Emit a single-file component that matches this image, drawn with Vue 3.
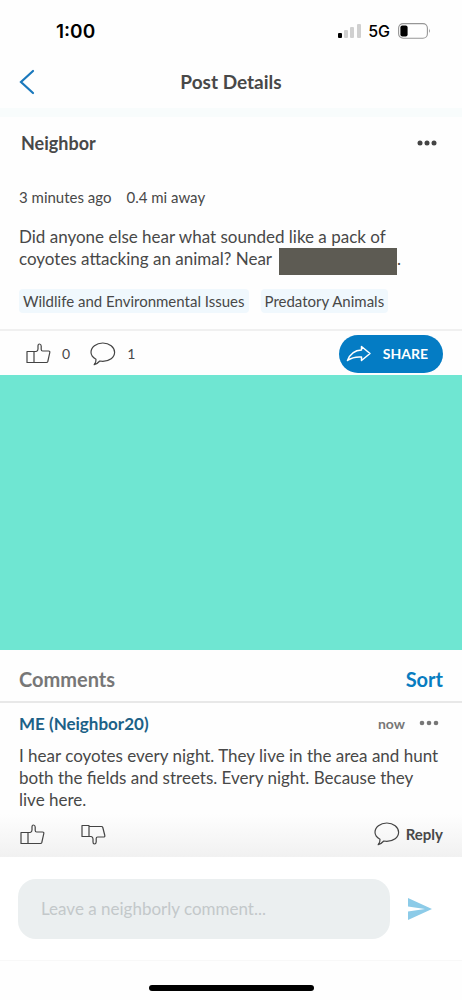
<script setup>
import { ref } from 'vue'

const tags = ['Wildlife and Environmental Issues', 'Predatory Animals']
const draft = ref('')
</script>

<template>
  <div class="screen">
    <div class="status">
      <span class="clock">1:00</span>
      <div class="indicators">
        <svg class="signal" viewBox="0 0 24 16" aria-hidden="true">
          <rect x="0" y="10" width="4" height="5" rx="1" fill="#000" />
          <rect x="6" y="7" width="4" height="8" rx="1" fill="#d0d0d0" />
          <rect x="12" y="4" width="4" height="11" rx="1" fill="#d0d0d0" />
          <rect x="19" y="1" width="4" height="14" rx="1" fill="#d0d0d0" />
        </svg>
        <span class="network">5G</span>
        <svg class="battery" viewBox="0 0 33 16" aria-hidden="true">
          <rect x="0.6" y="0.6" width="28.8" height="14.6" rx="4.5" fill="none" stroke="#969696" stroke-width="1.1" />
          <rect x="2.4" y="2.4" width="7.2" height="11" rx="2" fill="#000" />
          <path d="M31 5.5q1.8 2.3 0 4.6z" fill="#969696" />
        </svg>
      </div>
    </div>

    <header class="nav">
      <button class="back" type="button" aria-label="Back">
        <svg viewBox="0 0 16 26" aria-hidden="true">
          <path d="M14 2 2 13l12 11" fill="none" stroke="#1a78bc" stroke-width="2.2" stroke-linecap="round" />
        </svg>
      </button>
      <h1>Post Details</h1>
    </header>

    <main>
      <article class="post">
        <div class="author">
          <h2>Neighbor</h2>
          <button class="more" type="button" aria-label="Post options">
            <svg viewBox="0 0 20 6" fill="#444" aria-hidden="true">
              <circle cx="3" cy="3" r="2.5" /><circle cx="10" cy="3" r="2.5" /><circle cx="17" cy="3" r="2.5" />
            </svg>
          </button>
        </div>
        <div class="meta"><span>3 minutes ago</span><span>0.4 mi away</span></div>
        <p class="body">
          Did anyone else hear what sounded like a pack of coyotes attacking an animal? Near <span class="redacted"></span>.
        </p>
        <div class="tags">
          <span v-for="tag in tags" :key="tag" class="tag">{{ tag }}</span>
        </div>
      </article>

      <div class="actions">
        <button class="count" type="button" aria-label="Like post">
          <svg class="thumb" viewBox="0 0 25 21" aria-hidden="true">
            <path d="M1 8.5h7v11H1zM8 8.5h2.2q1.8-.4 1.8-2.5V3q0-2 1.500-2T15.200 3v3.500q0 1.500 1.500 1.500h5.800q1.600 0 1.300 1.500l-2 9q-.3 1-1.400 1H8" />
          </svg>
          <span>0</span>
        </button>
        <button class="count replies" type="button" aria-label="Show comments">
          <svg class="bubble" viewBox="0 0 26 24" aria-hidden="true">
            <path d="M6 17.200C2.700 15.500 1 13 1 10.300 1 5.100 6.200 1 12.800 1s11.800 4.100 11.800 9.300-5.200 9-11.800 9l-3-.3Q7.500 21.600 4.200 22.700 6.300 20 6 17.200z" />
          </svg>
          <span>1</span>
        </button>
        <button class="share" type="button">
          <svg viewBox="0 0 26 18" aria-hidden="true">
            <path d="M1.500 15.500C4 9 8.500 5.300 15.500 5V1.500L24 8.500l-8.500 7V12C9.500 11.500 5.500 12.700 1.500 15.500z" />
          </svg>
          <span>SHARE</span>
        </button>
      </div>

      <div class="banner"></div>

      <section class="comments">
        <div class="comments-head">
          <h2>Comments</h2>
          <button class="sort" type="button">Sort</button>
        </div>
        <article class="comment">
          <div class="comment-head">
            <h3>ME (Neighbor20)</h3>
            <time>now</time>
            <button class="more" type="button" aria-label="Comment options">
              <svg viewBox="0 0 20 6" fill="#777" aria-hidden="true">
                <circle cx="3" cy="3" r="2.300" /><circle cx="10" cy="3" r="2.300" /><circle cx="17" cy="3" r="2.300" />
              </svg>
            </button>
          </div>
          <p class="body">
            I hear coyotes every night. They live in the area and hunt both the fields and streets. Every night. Because they live here.
          </p>
          <div class="comment-actions">
            <button type="button" aria-label="Like comment">
              <svg class="thumb" viewBox="0 0 25 21" aria-hidden="true">
                <path d="M1 8.5h7v11H1zM8 8.5h2.200q1.800-.4 1.800-2.500V3q0-2 1.500-2T15.200 3v3.500q0 1.500 1.500 1.500h5.800q1.600 0 1.300 1.500l-2 9q-.3 1-1.400 1H8" />
              </svg>
            </button>
            <button type="button" aria-label="Dislike comment">
              <svg class="thumb" viewBox="0 0 25 21" aria-hidden="true">
                <path d="M1 12.500h7v-11H1zM8 12.500h2.200q1.800.4 1.800 2.500v3q0 2 1.500 2t1.700-2v-3.500q0-1.500 1.500-1.500h5.800q1.600 0 1.300-1.500l-2-8q-.3-1-1.400-1H8" />
              </svg>
            </button>
            <button class="reply" type="button">
              <svg class="bubble" viewBox="0 0 26 24" aria-hidden="true">
                <path d="M6 17.200C2.700 15.500 1 13 1 10.300 1 5.100 6.200 1 12.800 1s11.800 4.100 11.800 9.300-5.200 9-11.800 9l-3-.3Q7.500 21.600 4.200 22.700 6.300 20 6 17.200z" />
              </svg>
              <span>Reply</span>
            </button>
          </div>
        </article>
      </section>
    </main>

    <form class="composer" @submit.prevent>
      <input v-model="draft" type="text" aria-label="Comment" placeholder="Leave a neighborly comment..." />
      <button type="submit" aria-label="Send comment">
        <svg viewBox="0 0 26 22" aria-hidden="true">
          <path d="M1 0 25 11 1 22v-8.500L18 11 1 8.500z" fill="#8ccbe8" />
        </svg>
      </button>
    </form>
    <footer class="home"><span></span></footer>
  </div>
</template>

<style>
body {
  margin: 0;
  background: #fff;
}
</style>

<style scoped>
.screen {
  display: flex;
  flex-direction: column;
  min-height: 100vh;
  color: #484848;
  font-family: Lato, "Liberation Sans", sans-serif;
  background: #fefefe;
}
* {
  box-sizing: border-box;
}
h1, h2, h3, p {
  margin: 0;
}
button {
  display: flex;
  align-items: center;
  padding: 0;
  border: 0;
  background: none;
  color: inherit;
  font: inherit;
  cursor: pointer;
}
svg {
  display: block;
  flex: none;
}
.status {
  display: flex;
  align-items: center;
  justify-content: space-between;
  height: 56px;
  padding: 6px 31px 0 56px;
  color: #000;
  font-family: Inter, "Liberation Sans", sans-serif;
}
.clock {
  font-size: 19px;
  font-weight: 600;
}
.indicators {
  display: flex;
  align-items: center;
}
.signal {
  width: 24px;
  height: 16px;
}
.network {
  margin: 0 8px 0 6px;
  font-size: 16px;
  font-weight: 500;
}
.battery {
  width: 33px;
  height: 16px;
}
.nav {
  display: grid;
  grid-template-columns: 1fr auto 1fr;
  align-items: center;
  height: 61px;
  padding: 0 19px;
  border-bottom: 9px solid #f8fcfc;
}
.back svg {
  width: 16px;
  height: 26px;
}
.nav h1 {
  font-size: 19px;
  font-weight: 700;
  line-height: 24px;
}
.post {
  padding: 0 19px 16px;
  border-bottom: 2px solid #f0f0f0;
}
.author {
  display: flex;
  align-items: center;
  justify-content: space-between;
  height: 52px;
  padding: 0 6px 0 2px;
}
.author h2 {
  font-size: 18px;
  font-weight: 700;
}
.more svg {
  width: 20px;
  height: 6px;
}
.meta {
  display: flex;
  gap: 15px;
  margin-top: 18px;
  font-size: 15px;
  line-height: 20px;
}
.body {
  font-size: 17px;
  line-height: 22px;
}
.post .body {
  margin-top: 19px;
}
.redacted {
  display: inline-block;
  width: 118px;
  height: 27px;
  margin: 0 0 -8px 3px;
  vertical-align: top;
  background: #5d5b53;
}
.tags {
  display: flex;
  flex-wrap: wrap;
  gap: 12px;
  margin-top: 19px;
}
.tag {
  padding: 0 4px;
  border-radius: 4px;
  background: #f0f8fd;
  font-size: 15px;
  line-height: 24px;
}
.actions {
  display: flex;
  align-items: center;
  height: 44px;
  padding: 1px 19px 0 26px;
}
.thumb,
.bubble,
.share svg {
  fill: none;
  stroke: #444;
  stroke-width: 1.2;
  stroke-linejoin: round;
}
.thumb {
  width: 25px;
  height: 21px;
}
.bubble {
  width: 26px;
  height: 24px;
}
.count {
  gap: 11px;
  font-size: 14px;
}
.replies {
  margin-left: 20px;
}
.share {
  gap: 11px;
  height: 38px;
  margin-left: auto;
  padding: 0 15px 0 7px;
  border-radius: 19px;
  background: #047cc4;
  color: #fff;
  font-size: 14px;
  font-weight: 700;
}
.share svg {
  width: 26px;
  height: 18px;
  stroke: #fff;
  stroke-width: 1.5;
}
.banner {
  height: 275px;
  background: #6fe6d2;
}
.comments-head {
  display: flex;
  align-items: center;
  justify-content: space-between;
  height: 53px;
  padding: 6px 19px 0;
  border-bottom: 2px solid #e8e8e8;
  font-size: 20px;
}
.comments-head h2 {
  color: #777;
  font-size: 20px;
  font-weight: 700;
}
.sort {
  color: #087cc0;
  font-weight: 700;
}
.comment {
  padding: 7px 19px 11px;
  background: linear-gradient(#fefefe 72%, #f1f1f1);
}
.comment-head {
  display: flex;
  align-items: center;
  height: 26px;
  padding-right: 4px;
}
.comment-head h3 {
  color: #1c6187;
  font-size: 17px;
  font-weight: 700;
}
.comment-head time {
  margin: 0 14px 0 auto;
  color: #777;
  font-size: 14px;
  font-weight: 700;
}
.comment .body {
  margin-top: 9px;
  padding-right: 4px;
}
.comment-actions {
  display: flex;
  align-items: center;
  gap: 36px;
  height: 24px;
  margin-top: 11px;
  padding-left: 1px;
}
.reply {
  gap: 6px;
  margin-left: auto;
  font-size: 15px;
  font-weight: 700;
}
.composer {
  display: flex;
  align-items: center;
  gap: 17px;
  height: 104px;
  padding: 0 29px 0 18px;
  background: #fff;
  border-bottom: 1px solid #f8f8f8;
}
.composer input {
  flex: 1;
  min-width: 0;
  height: 60px;
  padding: 0 23px;
  border: 0;
  border-radius: 18px;
  outline: none;
  background: #ebeff0;
  color: #484848;
  font: 17px Lato, "Liberation Sans", sans-serif;
}
.composer input::placeholder {
  color: #c3c8ca;
  opacity: 1;
}
.composer svg {
  width: 26px;
  height: 22px;
}
.home {
  display: flex;
  justify-content: center;
  height: 40px;
  padding-top: 24px;
}
.home span {
  width: 165px;
  height: 6px;
  border-radius: 3px;
  background: #000;
}
</style>
